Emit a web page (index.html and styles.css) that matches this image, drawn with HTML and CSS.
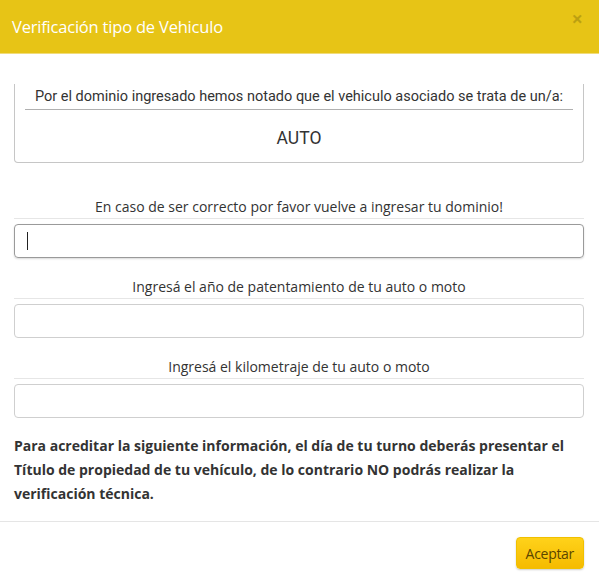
FILE: index.html
```html
<!DOCTYPE html>
<html lang="es">
<head>
<meta charset="utf-8">
<title>Verificación tipo de Vehiculo</title>
<link rel="stylesheet" href="styles.css">
</head>
<body>
<div class="modal">
  <div class="modal-header">
    <h4 class="modal-title">Verificación tipo de Vehiculo</h4>
    <button class="close" type="button">×</button>
  </div>
  <div class="modal-body">
    <div class="result-box">
      <p class="result-label">Por el dominio ingresado hemos notado que el vehiculo asociado se trata de un/a:</p>
      <p class="result-value">AUTO</p>
    </div>
    <div class="field">
      <label class="field-label">En caso de ser correcto por favor vuelve a ingresar tu dominio!</label>
      <div class="input focused"><span class="caret"></span></div>
    </div>
    <div class="field">
      <label class="field-label">Ingresá el año de patentamiento de tu auto o moto</label>
      <div class="input"></div>
    </div>
    <div class="field">
      <label class="field-label">Ingresá el kilometraje de tu auto o moto</label>
      <div class="input"></div>
    </div>
    <p class="notice">Para acreditar la siguiente información, el día de tu turno deberás presentar el Título de propiedad de tu vehículo, de lo contrario NO podrás realizar la verificación técnica.</p>
  </div>
  <div class="modal-footer">
    <button class="btn-accept" type="button">Aceptar</button>
  </div>
</div>
</body>
</html>
```
FILE: styles.css
```css
html, body {
  margin: 0;
  padding: 0;
  background: #fff;
}
body {
  font-family: "Open Sans", "Noto Sans", sans-serif;
  color: #333;
  font-size: 14px;
}
.modal {
  width: 599px;
}
.modal-header {
  background: #e7c416;
  border-bottom: 1px solid #f1dc7a;
  display: flex;
  align-items: center;
  justify-content: space-between;
  padding: 0 12px;
  box-sizing: border-box;
  height: 54px;
}
.modal-title {
  margin: 0;
  font-weight: normal;
  font-size: 16.5px;
  color: #fff;
  letter-spacing: -0.2px;
}
.close {
  border: 0;
  background: none;
  padding: 0;
  font-family: "Open Sans", sans-serif;
  font-size: 20px;
  font-weight: bold;
  line-height: 1;
  color: #000;
  opacity: 0.18;
  align-self: flex-start;
  margin-top: 9px;
  margin-right: 4px;
}
.modal-body {
  padding: 30px 15px 0 14px;
}
.result-box {
  border: 1px solid #c6c6c6;
  border-top: none;
  border-radius: 0 0 4px 4px;
  padding: 0 10px 14px;
  text-align: center;
  font-family: Roboto, "Liberation Sans", sans-serif;
  color: #333;
}
.result-label {
  margin: 0;
  padding: 3px 0 2px;
  line-height: 20px;
  font-size: 14.5px;
  border-bottom: 1px solid #b0b0b0;
}
.result-value {
  margin: 18px 0 0;
  font-size: 17.5px;
  line-height: 20px;
}
.field {
  display: flex;
  flex-direction: column;
  margin-top: 34px;
}
.field + .field {
  margin-top: 19px;
}
.field-label {
  display: block;
  text-align: center;
  line-height: 20px;
  font-size: 14px;
  padding-bottom: 1px;
  border-bottom: 1px solid #e6e6e6;
  color: #333;
}
.input {
  margin-top: 5px;
  height: 34px;
  box-sizing: border-box;
  border: 1px solid #cfcfcf;
  border-radius: 4px;
  display: flex;
  align-items: center;
  padding-left: 12px;
}
.input.focused {
  border-color: #9a9a9a;
  box-shadow: 0 1px 2px rgba(0,0,0,0.15);
}
.caret {
  width: 1px;
  height: 18px;
  background: #222;
}
.notice {
  margin: 16px 0 0;
  font-weight: bold;
  font-size: 14px;
  line-height: 24px;
  color: #333;
}
.modal-footer {
  margin-top: 15px;
  border-top: 1px solid #e5e5e5;
  padding: 15px 15px 15px;
  display: flex;
  justify-content: flex-end;
}
.btn-accept {
  font-family: "Open Sans", sans-serif;
  font-size: 14px;
  color: #5a4600;
  background: linear-gradient(#ffd21a, #f5bb00);
  border: 1px solid #f0c000;
  border-radius: 4px;
  height: 32px;
  padding: 0 9px;
  box-shadow: 0 1px 2px rgba(0,0,0,0.2);
  letter-spacing: -0.3px;
}
```
